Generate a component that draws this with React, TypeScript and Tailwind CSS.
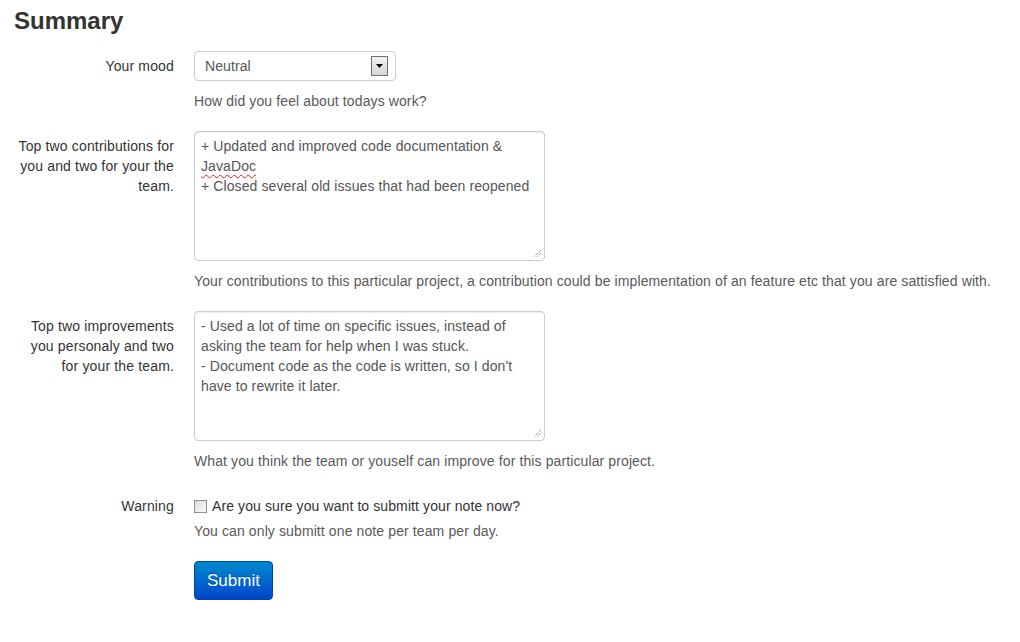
import React from "react";

const font = { fontFamily: '"Liberation Sans", Arial, Helvetica, sans-serif' };

const Grip = () => (
  <svg
    className="absolute right-[2px] bottom-[2px]"
    width="9"
    height="9"
    viewBox="0 0 9 9"
  >
    <path d="M8 1 L1 8 M8 4 L4 8" stroke="#7a7a7a" strokeWidth="1" strokeDasharray="1 1" />
  </svg>
);

const Box = ({ children }: { children: React.ReactNode }) => (
  <div className="relative w-[351px] h-[130px] border border-[#cccccc] rounded-[4px] px-[6px] py-[4px] text-[14px] leading-[20px] text-[#555555] tracking-[0.1px] shadow-[inset_0_1px_1px_rgba(0,0,0,0.075)]">
    {children}
    <Grip />
  </div>
);

const Group = ({
  label,
  children,
  help,
  helpTop = "mt-[10px]",
}: {
  label: React.ReactNode;
  children: React.ReactNode;
  help?: string;
  helpTop?: string;
}) => (
  <div className="flex mb-[20px]">
    <div className="w-[160px] pt-[5px] text-right text-[14px] leading-[20px] text-[#333333] tracking-[0.15px] shrink-0 whitespace-nowrap">
      {label}
    </div>
    <div className="ml-[20px]">
      {children}
      {help && (
        <p className={`${helpTop} text-[14px] leading-[20px] text-[#595959] tracking-[0.11px] whitespace-nowrap`}>
          {help}
        </p>
      )}
    </div>
  </div>
);

export default function App() {
  return (
    <div className="min-h-screen bg-white pl-[14px]" style={font}>
      <h3 className="pt-[1px] text-[24px] leading-[40px] font-bold text-[#333333]">
        Summary
      </h3>
      <div className="mt-[10px]">
        <Group label="Your mood" help="How did you feel about todays work?">
          <div className="flex items-center justify-between w-[202px] h-[30px] border border-[#cccccc] rounded-[4px] pl-[10px] pr-[7px] text-[14px] text-[#555555] tracking-[0.1px]">
            <span>Neutral</span>
            <span className="flex items-center justify-center w-[17px] h-[20px] border border-[#707070] bg-gradient-to-b from-[#f2f2f2] to-[#d5d5d5]">
              <svg width="7" height="4" viewBox="0 0 7 4">
                <path d="M0 0 H7 L3.5 4 Z" fill="#000" />
              </svg>
            </span>
          </div>
        </Group>

        <Group
          label={
            <>
              Top two contributions for
              <br />
              you and two for your the
              <br />
              team.
            </>
          }
          help="Your contributions to this particular project, a contribution could be implementation of an feature etc that you are sattisfied with."
        >
          <Box>
            + Updated and improved code documentation &amp;
            <br />
            <span className="underline decoration-wavy decoration-[#e02020] decoration-1 underline-offset-[3px]">
              JavaDoc
            </span>
            <br />+ Closed several old issues that had been reopened
          </Box>
        </Group>

        <Group
          label={
            <>
              Top two improvements
              <br />
              you personaly and two
              <br />
              for your the team.
            </>
          }
          help="What you think the team or youself can improve for this particular project."
        >
          <Box>
            - Used a lot of time on specific issues, instead of
            <br />
            asking the team for help when I was stuck.
            <br />- Document code as the code is written, so I don't
            <br />
            have to rewrite it later.
          </Box>
        </Group>

        <Group
          label="Warning"
          help="You can only submitt one note per team per day."
          helpTop="mt-[5px]"
        >
          <label className="flex items-center pt-[5px] text-[14px] leading-[20px] text-[#333333] tracking-[0.1px] whitespace-nowrap">
            <span className="w-[13px] h-[13px] border border-[#8f8f8f] bg-gradient-to-br from-[#dcdcdc] to-[#fbfbfb] mr-[5px]" />
            Are you sure you want to submitt your note now?
          </label>
        </Group>

        <div className="ml-[180px]">
          <button className="h-[39px] w-[79px] rounded-[4px] border border-[#0044aa] bg-gradient-to-b from-[#0088cc] to-[#0044cc] text-white text-[17px] leading-[20px] [text-shadow:0_-1px_0_rgba(0,0,0,0.25)]">
            Submit
          </button>
        </div>
      </div>
    </div>
  );
}
